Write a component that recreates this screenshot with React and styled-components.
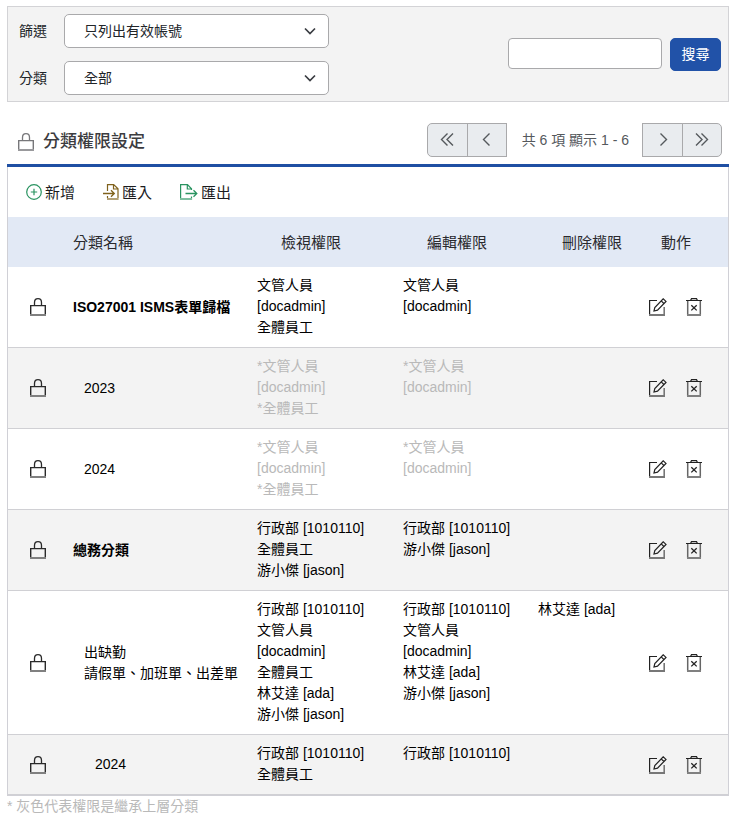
import React, { useState } from "react";
import styled, { createGlobalStyle } from "styled-components";

const GlobalStyle = createGlobalStyle`
  * {
    box-sizing: border-box;
  }
  body {
    margin: 6px 6px 0 7px;
    background: #fff;
    color: #000;
    font-family: "Liberation Sans", "Noto Sans CJK TC", sans-serif;
    font-size: 14px;
    line-height: 21px;
  }
  button, input, select {
    font: inherit;
  }
`;

const FilterBar = styled.form`
  display: flex;
  align-items: center;
  justify-content: space-between;
  padding: 7px 7px 6px 11px;
  background: #f3f3f3;
  border: 1px solid #d3d3d6;
`;

const FilterGroup = styled.div`
  display: grid;
  grid-template-columns: auto 265px;
  gap: 13px 17px;
  align-items: center;
`;

const FilterLabel = styled.label`
  color: #212529;
`;

const SelectWrap = styled.div`
  display: grid;
  align-items: center;

  > * {
    grid-area: 1 / 1;
  }
  svg {
    justify-self: end;
    margin-right: 12px;
    pointer-events: none;
  }
`;

const Select = styled.select`
  width: 100%;
  height: 34px;
  padding: 0 32px 0 19px;
  appearance: none;
  color: #212529;
  background: #fff;
  border: 1px solid #a9a9ab;
  border-radius: 5px;
`;

const SearchGroup = styled.div`
  display: flex;
  align-items: flex-start;
  gap: 8px;
`;

const SearchInput = styled.input`
  width: 154px;
  height: 31px;
  padding: 0 8px;
  background: #fff;
  border: 1px solid #a9a9ab;
  border-radius: 4px;
`;

const SearchButton = styled.button`
  width: 51px;
  height: 33px;
  padding: 0;
  color: #fff;
  background: #2152a8;
  border: 1px solid #2152a8;
  border-radius: 5px;
  cursor: pointer;
`;

const PanelHeader = styled.header`
  display: flex;
  align-items: center;
  justify-content: space-between;
  padding: 21px 7px 7px 11px;
  border-bottom: 3px solid #1f4fa3;
`;

const Title = styled.h1`
  display: flex;
  align-items: center;
  gap: 9px;
  margin: 3px 0 0;
  color: #3c3c40;
  font-size: 17px;
  font-weight: 500;
`;

const Pager = styled.nav`
  display: flex;
  align-items: center;
`;

const PagerText = styled.span`
  padding: 0 13px 0 15px;
  color: #55595d;
`;

const PagerButton = styled.button`
  display: grid;
  place-items: center;
  width: ${(props) => (props.$joined ? "41px" : "40px")};
  height: 34px;
  margin-right: ${(props) => (props.$joined ? "-1px" : "0")};
  padding: 0;
  color: #55595d;
  background: #e9ecef;
  border: 1px solid #a9a9ab;
  border-radius: ${(props) => {
    if (props.$edge === "left") return "5px 0 0 5px";
    if (props.$edge === "right") return "0 5px 5px 0";
    return "0";
  }};
  cursor: pointer;
`;

const Panel = styled.section`
  border: 1px solid #d0d0d6;
  border-top: 0;
`;

const Toolbar = styled.div`
  display: flex;
  align-items: center;
  gap: 28px;
  height: 50px;
  padding: 0 18px;
`;

const ToolButton = styled.button`
  display: flex;
  align-items: center;
  gap: 3px;
  padding: 0;
  color: #1c1c1e;
  font-size: 15px;
  background: none;
  border: 0;
  cursor: pointer;

  svg {
    color: ${(props) => props.$tone};
  }
`;

const Table = styled.table`
  width: 100%;
  table-layout: fixed;
  border-collapse: separate;
  border-spacing: 0;
`;

const Col = styled.col`
  width: ${(props) => props.$width};
`;

const HeadCell = styled.th`
  height: 50px;
  padding: 0 0 0 ${(props) => props.$indent};
  color: #2a2a2e;
  background: #e2e9f5;
  font-size: 15px;
  font-weight: 400;
  text-align: left;
  white-space: nowrap;
`;

const Row = styled.tr`
  background: ${(props) => (props.$striped ? "#f3f3f3" : "#fff")};
`;

const Cell = styled.td`
  padding: 8px 16px 9px 8px;
  border-bottom: 1px solid #d0d0d4;
  color: ${(props) => (props.$inherited ? "#b9b9b9" : "#000")};
  vertical-align: top;
`;

const IconCell = styled(Cell)`
  padding: 0 0 0 22px;
  vertical-align: middle;

  svg {
    display: block;
  }
`;

const NameCell = styled(Cell)`
  padding: 0 8px 0 ${(props) => 8 + props.$level * 11}px;
  font-weight: ${(props) => (props.$level === 0 ? 700 : 400)};
  vertical-align: middle;
`;

const ActionCell = styled(Cell)`
  padding: 0 0 0 8px;
  vertical-align: middle;
`;

const Actions = styled.div`
  display: flex;
  gap: 19px;
`;

const IconButton = styled.button`
  display: block;
  padding: 0;
  color: #222;
  background: none;
  border: 0;
  cursor: pointer;

  svg {
    display: block;
  }
`;

const Note = styled.p`
  margin: 0;
  color: #b9b9b9;
`;

const Lock = ({ color = "#2a2a2a", base = "#808080" }) => (
  <svg width="16" height="18" viewBox="0 0 16 18" fill="none" stroke={color}>
    <path d="M4.500 7V4.500C4.500 2 6 .7 8 .7s3.500 1.300 3.500 3.800V7" strokeWidth="1.300" />
    <path d="M.7 16V7.600h14.600V16" strokeWidth="1.400" />
    <path d="M0 17h16" stroke={base} strokeWidth="2" />
  </svg>
);

const Edit = () => (
  <svg width="18" height="18" viewBox="0 0 18 18" fill="none" stroke="currentColor">
    <path d="M8 2.500H.6V17" strokeWidth="1.200" />
    <path d="M0 17h16" stroke="#777" strokeWidth="2" />
    <path d="M15.200 17V9" stroke="#777" strokeWidth="1.600" />
    <path d="M5 13l.8-3.400 8.400-8.800 2.800 2.600-8.500 8.800zM12.200 2.900l2.700 2.600" strokeWidth="1.200" />
  </svg>
);

const Trash = () => (
  <svg width="16" height="18" viewBox="0 0 16 18" fill="none" stroke="currentColor">
    <path d="M1.700 3v14M14.300 3v14" stroke="#666" strokeWidth="1.500" />
    <path d="M1 17h14" stroke="#808080" strokeWidth="2" />
    <path d="M0 2.500h16M4.500 2.500l1-1.900h5l1 1.900" strokeWidth="1.200" />
    <path d="M5.300 7.200l5.400 5.200M10.700 7.200l-5.400 5.200" strokeWidth="1.300" />
  </svg>
);

const Plus = () => (
  <svg width="16" height="16" viewBox="0 0 16 16" fill="none" stroke="currentColor">
    <circle cx="8" cy="8" r="7.300" strokeWidth="1.200" />
    <path d="M8 4.800v6.400M4.800 8h6.400" strokeWidth="1.200" />
  </svg>
);

const Import = () => (
  <svg width="16" height="16" viewBox="0 0 16 16" fill="none" stroke="currentColor">
    <path d="M4.500 7V.6h6.200L15 4.800V14M4.500 12v2M10.500.6V5H15" strokeWidth="1.200" />
    <path d="M4 15h11.600" strokeOpacity=".6" strokeWidth="2" />
    <path d="M0 9.500h11M8 6.200l3.300 3.300L8 12.800" strokeWidth="1.300" />
  </svg>
);

const Export = () => (
  <svg width="18" height="16" viewBox="0 0 18 16" fill="none" stroke="currentColor">
    <path d="M11.500 6V4.800L7.500.6H.6V14M7.300.6V5h4.200M11.500 12.500V14" strokeWidth="1.200" />
    <path d="M0 15h12.100" strokeOpacity=".6" strokeWidth="2" />
    <path d="M5.500 9.500H17M13.500 6.200l3.300 3.300-3.300 3.300" strokeWidth="1.300" />
  </svg>
);

const Chevron = () => (
  <svg width="14" height="14" viewBox="0 0 14 14" fill="none" stroke="#3a3d42" strokeWidth="1.700">
    <path d="M2 4.500l5 5 5-5" />
  </svg>
);

const arrows = {
  first: "M8.500 1.500l-6 6 6 6M14 1.500l-6 6 6 6",
  prev: "M10.500 1.500l-6 6 6 6",
  next: "M5.500 1.500l6 6-6 6",
  last: "M2 1.500l6 6-6 6M7.500 1.500l6 6-6 6",
};

const Arrow = ({ kind }) => (
  <svg width="16" height="16" viewBox="0 0 16 16" fill="none" stroke="currentColor" strokeWidth="1.400">
    <path d={arrows[kind]} />
  </svg>
);

const rows = [
  {
    id: 1,
    level: 0,
    name: ["ISO27001 ISMS表單歸檔"],
    view: ["文管人員 [docadmin]", "全體員工"],
    edit: ["文管人員 [docadmin]"],
    remove: [],
  },
  {
    id: 2,
    level: 1,
    name: ["2023"],
    view: ["*文管人員 [docadmin]", "*全體員工"],
    edit: ["*文管人員 [docadmin]"],
    remove: [],
    inherited: true,
  },
  {
    id: 3,
    level: 1,
    name: ["2024"],
    view: ["*文管人員 [docadmin]", "*全體員工"],
    edit: ["*文管人員 [docadmin]"],
    remove: [],
    inherited: true,
  },
  {
    id: 4,
    level: 0,
    name: ["總務分類"],
    view: ["行政部 [1010110]", "全體員工", "游小傑 [jason]"],
    edit: ["行政部 [1010110]", "游小傑 [jason]"],
    remove: [],
  },
  {
    id: 5,
    level: 1,
    name: ["出缺勤", "請假單、加班單、出差單"],
    view: ["行政部 [1010110]", "文管人員 [docadmin]", "全體員工", "林艾達 [ada]", "游小傑 [jason]"],
    edit: ["行政部 [1010110]", "文管人員 [docadmin]", "林艾達 [ada]", "游小傑 [jason]"],
    remove: ["林艾達 [ada]"],
  },
  {
    id: 6,
    level: 2,
    name: ["2024"],
    view: ["行政部 [1010110]", "全體員工"],
    edit: ["行政部 [1010110]"],
    remove: [],
  },
];

const Lines = ({ items }) => items.map((item) => <div key={item}>{item}</div>);

const App = () => {
  const [keyword, setKeyword] = useState("");

  return (
    <>
      <GlobalStyle />
      <FilterBar onSubmit={(e) => e.preventDefault()}>
        <FilterGroup>
          <FilterLabel htmlFor="status">篩選</FilterLabel>
          <SelectWrap>
            <Select id="status">
              <option>只列出有效帳號</option>
            </Select>
            <Chevron />
          </SelectWrap>
          <FilterLabel htmlFor="category">分類</FilterLabel>
          <SelectWrap>
            <Select id="category">
              <option>全部</option>
            </Select>
            <Chevron />
          </SelectWrap>
        </FilterGroup>
        <SearchGroup>
          <SearchInput
            type="text"
            aria-label="搜尋"
            value={keyword}
            onChange={(e) => setKeyword(e.target.value)}
          />
          <SearchButton type="submit">搜尋</SearchButton>
        </SearchGroup>
      </FilterBar>

      <PanelHeader>
        <Title>
          <Lock color="#77777a" base="#99999c" />
          分類權限設定
        </Title>
        <Pager>
          <PagerButton $joined $edge="left" aria-label="第一頁">
            <Arrow kind="first" />
          </PagerButton>
          <PagerButton aria-label="上一頁">
            <Arrow kind="prev" />
          </PagerButton>
          <PagerText>共 6 項 顯示 1 - 6</PagerText>
          <PagerButton $joined aria-label="下一頁">
            <Arrow kind="next" />
          </PagerButton>
          <PagerButton $edge="right" aria-label="最後一頁">
            <Arrow kind="last" />
          </PagerButton>
        </Pager>
      </PanelHeader>

      <Panel>
        <Toolbar>
          <ToolButton $tone="#2a9461">
            <Plus />
            新增
          </ToolButton>
          <ToolButton $tone="#80621c">
            <Import />
            匯入
          </ToolButton>
          <ToolButton $tone="#2a9461">
            <Export />
            匯出
          </ToolButton>
        </Toolbar>
        <Table>
          <colgroup>
            <Col $width="57px" />
            <Col $width="184px" />
            <Col $width="146px" />
            <Col $width="135px" />
            <Col />
            <Col $width="87px" />
          </colgroup>
          <thead>
            <tr>
              <HeadCell as="td" $indent="0" />
              <HeadCell $indent="8px">分類名稱</HeadCell>
              <HeadCell $indent="32px">檢視權限</HeadCell>
              <HeadCell $indent="32px">編輯權限</HeadCell>
              <HeadCell $indent="32px">刪除權限</HeadCell>
              <HeadCell $indent="20px">動作</HeadCell>
            </tr>
          </thead>
          <tbody>
            {rows.map((row, i) => (
              <Row key={row.id} $striped={i % 2 === 1}>
                <IconCell>
                  <Lock />
                </IconCell>
                <NameCell $level={row.level}>
                  <Lines items={row.name} />
                </NameCell>
                <Cell $inherited={row.inherited}>
                  <Lines items={row.view} />
                </Cell>
                <Cell $inherited={row.inherited}>
                  <Lines items={row.edit} />
                </Cell>
                <Cell $inherited={row.inherited}>
                  <Lines items={row.remove} />
                </Cell>
                <ActionCell>
                  <Actions>
                    <IconButton aria-label="編輯">
                      <Edit />
                    </IconButton>
                    <IconButton aria-label="刪除">
                      <Trash />
                    </IconButton>
                  </Actions>
                </ActionCell>
              </Row>
            ))}
          </tbody>
        </Table>
      </Panel>
      <Note>* 灰色代表權限是繼承上層分類</Note>
    </>
  );
};

export default App;
